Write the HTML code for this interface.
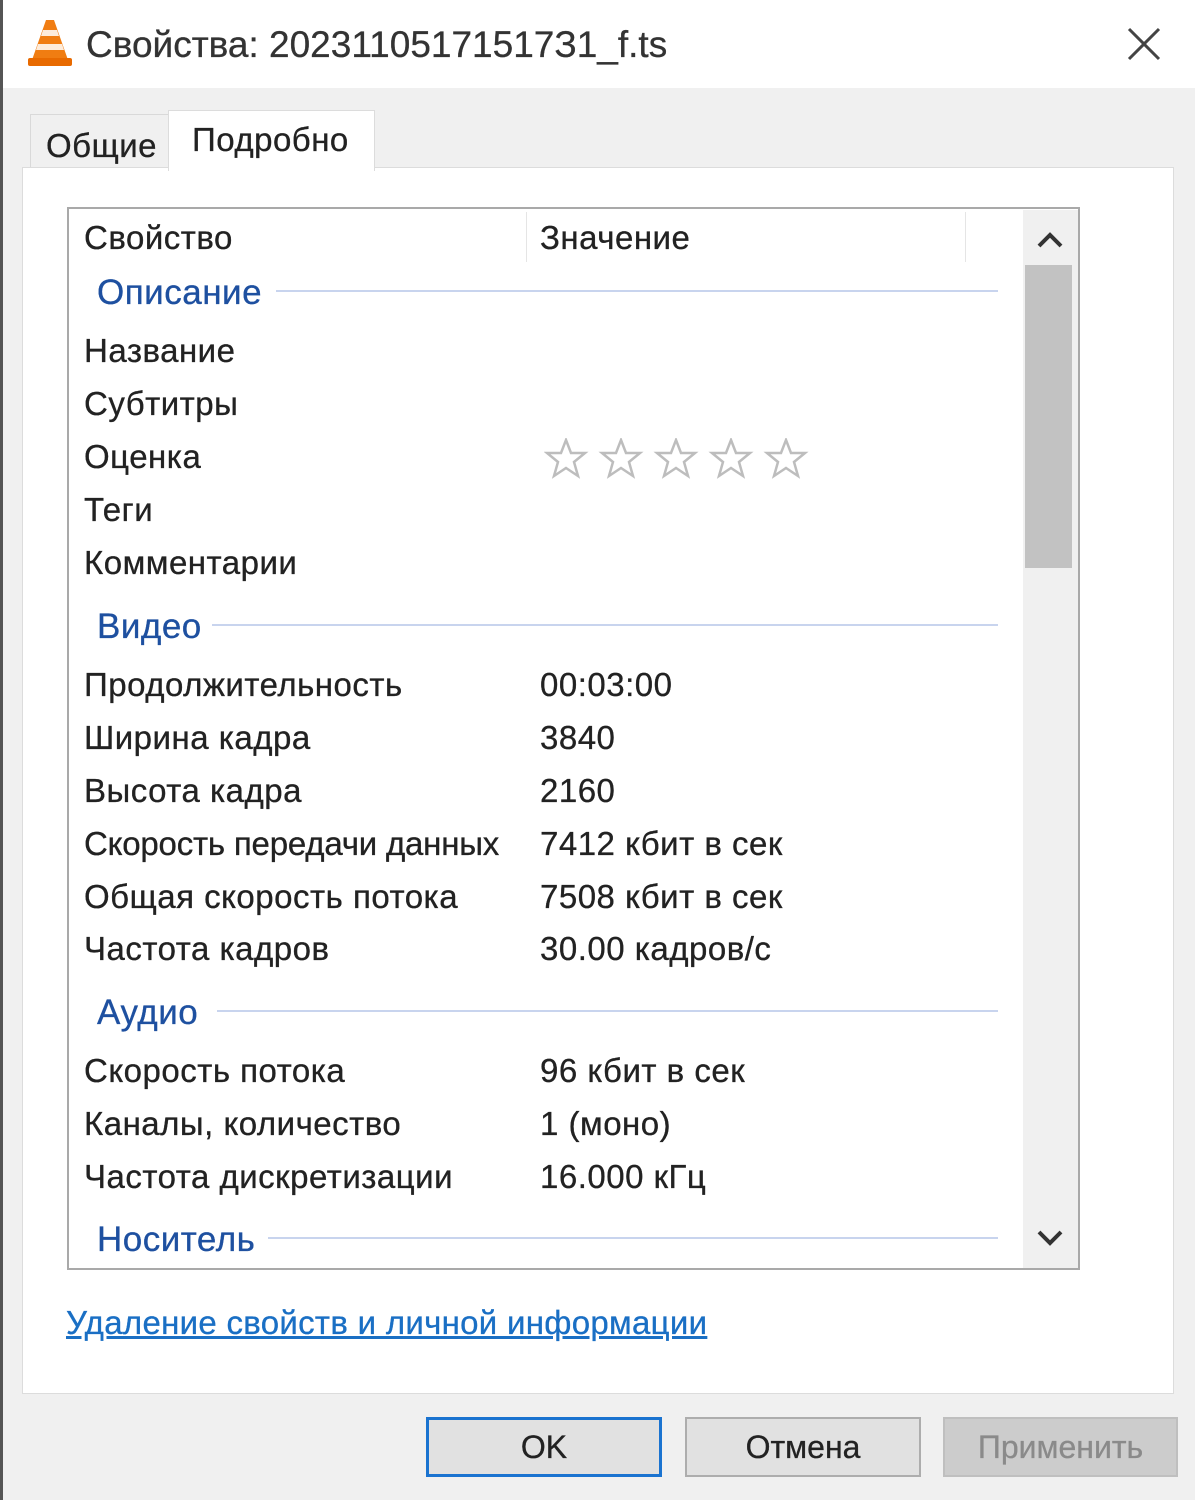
<!DOCTYPE html>
<html><head><meta charset="utf-8">
<style>
html,body{margin:0;padding:0}
body{width:1195px;height:1500px;position:relative;background:#f0f0f0;font-family:"Liberation Sans",sans-serif;color:#222;overflow:hidden}
.a{position:absolute;white-space:nowrap;line-height:38px;-webkit-text-stroke:0.3px currentColor}
.t{font-size:33px;letter-spacing:.5px}
.h{font-size:35px;letter-spacing:.5px;color:#1e50a0}
.ln{position:absolute;height:2px;background:#c8d4ee}
.btn{position:absolute;top:1417px;height:60px;background:#e1e1e1;border:2px solid #adadad;box-sizing:border-box;font-size:32px;text-align:center;line-height:56px;-webkit-text-stroke:0.3px currentColor}
</style></head><body>
<div style="position:absolute;left:0;top:0;width:3px;height:1500px;background:#555"></div>
<div style="position:absolute;left:3px;top:0;width:1192px;height:88px;background:#fff"></div>
<svg style="position:absolute;left:26px;top:16px" width="48" height="52" viewBox="0 0 48 52">
<path d="M20 4 L28 4 L42 44 L6 44 Z" fill="#f07d12"/>
<path d="M17 14 L31 14 L33 20 L15 20 Z" fill="#fff" opacity=".85"/>
<path d="M12 28 L36 28 L38 34 L10 34 Z" fill="#fff" opacity=".85"/>
<rect x="2" y="42" width="44" height="8" rx="2" fill="#e86a00"/>
</svg>
<div class="a" style="left:86px;top:26px;font-size:37px;color:#333">Свойства: 20231105171517З1_f.ts</div>
<svg style="position:absolute;left:1126px;top:26px" width="36" height="36"><path d="M3 3 L33 33 M33 3 L3 33" stroke="#444" stroke-width="3"/></svg>

<div style="position:absolute;left:30px;top:114px;width:137px;height:54px;background:#f0f0f0;border:1px solid #d9d9d9;border-bottom:none"></div>
<div class="a t" style="left:46px;top:127px">Общие</div>
<div style="position:absolute;left:22px;top:167px;width:1150px;height:1225px;background:#fff;border:1px solid #dcdcdc"></div>
<div style="position:absolute;left:168px;top:110px;width:205px;height:60px;background:#fff;border:1px solid #dcdcdc;border-bottom:none"></div>
<div class="a t" style="left:192px;top:121px">Подробно</div>

<div style="position:absolute;left:67px;top:207px;width:1013px;height:1063px;border:2px solid #a9a9a9;box-sizing:border-box;background:#fff"></div>
<div style="position:absolute;left:526px;top:212px;width:1px;height:50px;background:#e5e5e5"></div>
<div style="position:absolute;left:965px;top:212px;width:1px;height:50px;background:#e5e5e5"></div>
<div style="position:absolute;left:1023px;top:210px;width:55px;height:1058px;background:#f0f0f0"></div>
<div style="position:absolute;left:1025px;top:265px;width:47px;height:303px;background:#c2c2c2"></div>
<svg style="position:absolute;left:1036px;top:230px" width="28" height="20"><path d="M3 16 L14 5 L25 16" stroke="#333" stroke-width="4" fill="none"/></svg>
<svg style="position:absolute;left:1036px;top:1228px" width="28" height="20"><path d="M3 4 L14 15 L25 4" stroke="#333" stroke-width="4" fill="none"/></svg>

<div class="a t" style="left:84px;top:219px">Свойство</div>
<div class="a t" style="left:540px;top:219px">Значение</div>

<div class="a h" style="left:97px;top:274px">Описание</div><div class="ln" style="left:276px;top:290px;width:722px"></div>
<div class="a t" style="left:84px;top:332px">Название</div>
<div class="a t" style="left:84px;top:385px">Субтитры</div>
<div class="a t" style="left:84px;top:438px">Оценка</div>
<div class="a t" style="left:84px;top:491px">Теги</div>
<div class="a t" style="left:84px;top:544px">Комментарии</div>
<svg style="position:absolute;left:544px;top:438px" width="270" height="42">
<g fill="none" stroke="#bdbdbd" stroke-width="2.5">
<path id="s" d="M22 2 L27 15 L41 15 L30 24 L34 38 L22 30 L10 38 L14 24 L3 15 L17 15 Z"/>
<use href="#s" x="55"/><use href="#s" x="110"/><use href="#s" x="165"/><use href="#s" x="220"/>
</g></svg>

<div class="a h" style="left:97px;top:608px">Видео</div><div class="ln" style="left:212px;top:624px;width:786px"></div>
<div class="a t" style="left:84px;top:666px">Продолжительность</div><div class="a t" style="left:540px;top:666px">00:03:00</div>
<div class="a t" style="left:84px;top:719px">Ширина кадра</div><div class="a t" style="left:540px;top:719px">3840</div>
<div class="a t" style="left:84px;top:772px">Высота кадра</div><div class="a t" style="left:540px;top:772px">2160</div>
<div class="a t" style="left:84px;top:825px;letter-spacing:-.2px">Скорость передачи данных</div><div class="a t" style="left:540px;top:825px">7412 кбит в сек</div>
<div class="a t" style="left:84px;top:878px">Общая скорость потока</div><div class="a t" style="left:540px;top:878px">7508 кбит в сек</div>
<div class="a t" style="left:84px;top:930px">Частота кадров</div><div class="a t" style="left:540px;top:930px">30.00 кадров/с</div>

<div class="a h" style="left:97px;top:994px">Аудио</div><div class="ln" style="left:217px;top:1010px;width:781px"></div>
<div class="a t" style="left:84px;top:1052px">Скорость потока</div><div class="a t" style="left:540px;top:1052px">96 кбит в сек</div>
<div class="a t" style="left:84px;top:1105px">Каналы, количество</div><div class="a t" style="left:540px;top:1105px">1 (моно)</div>
<div class="a t" style="left:84px;top:1158px">Частота дискретизации</div><div class="a t" style="left:540px;top:1158px">16.000 кГц</div>

<div class="a h" style="left:97px;top:1221px">Носитель</div><div class="ln" style="left:268px;top:1237px;width:730px"></div>

<div class="a" style="left:66px;top:1304px;font-size:33px;letter-spacing:.3px;color:#1a6fc4;text-decoration:underline">Удаление свойств и личной информации</div>

<div class="btn" style="left:426px;width:236px;border-color:#1a73d0;border-width:3px;line-height:54px">OK</div>
<div class="btn" style="left:685px;width:236px">Отмена</div>
<div class="btn" style="left:943px;width:235px;background:#ccc;border-color:#bfbfbf;color:#8a8a8a">Применить</div>
</body></html>
